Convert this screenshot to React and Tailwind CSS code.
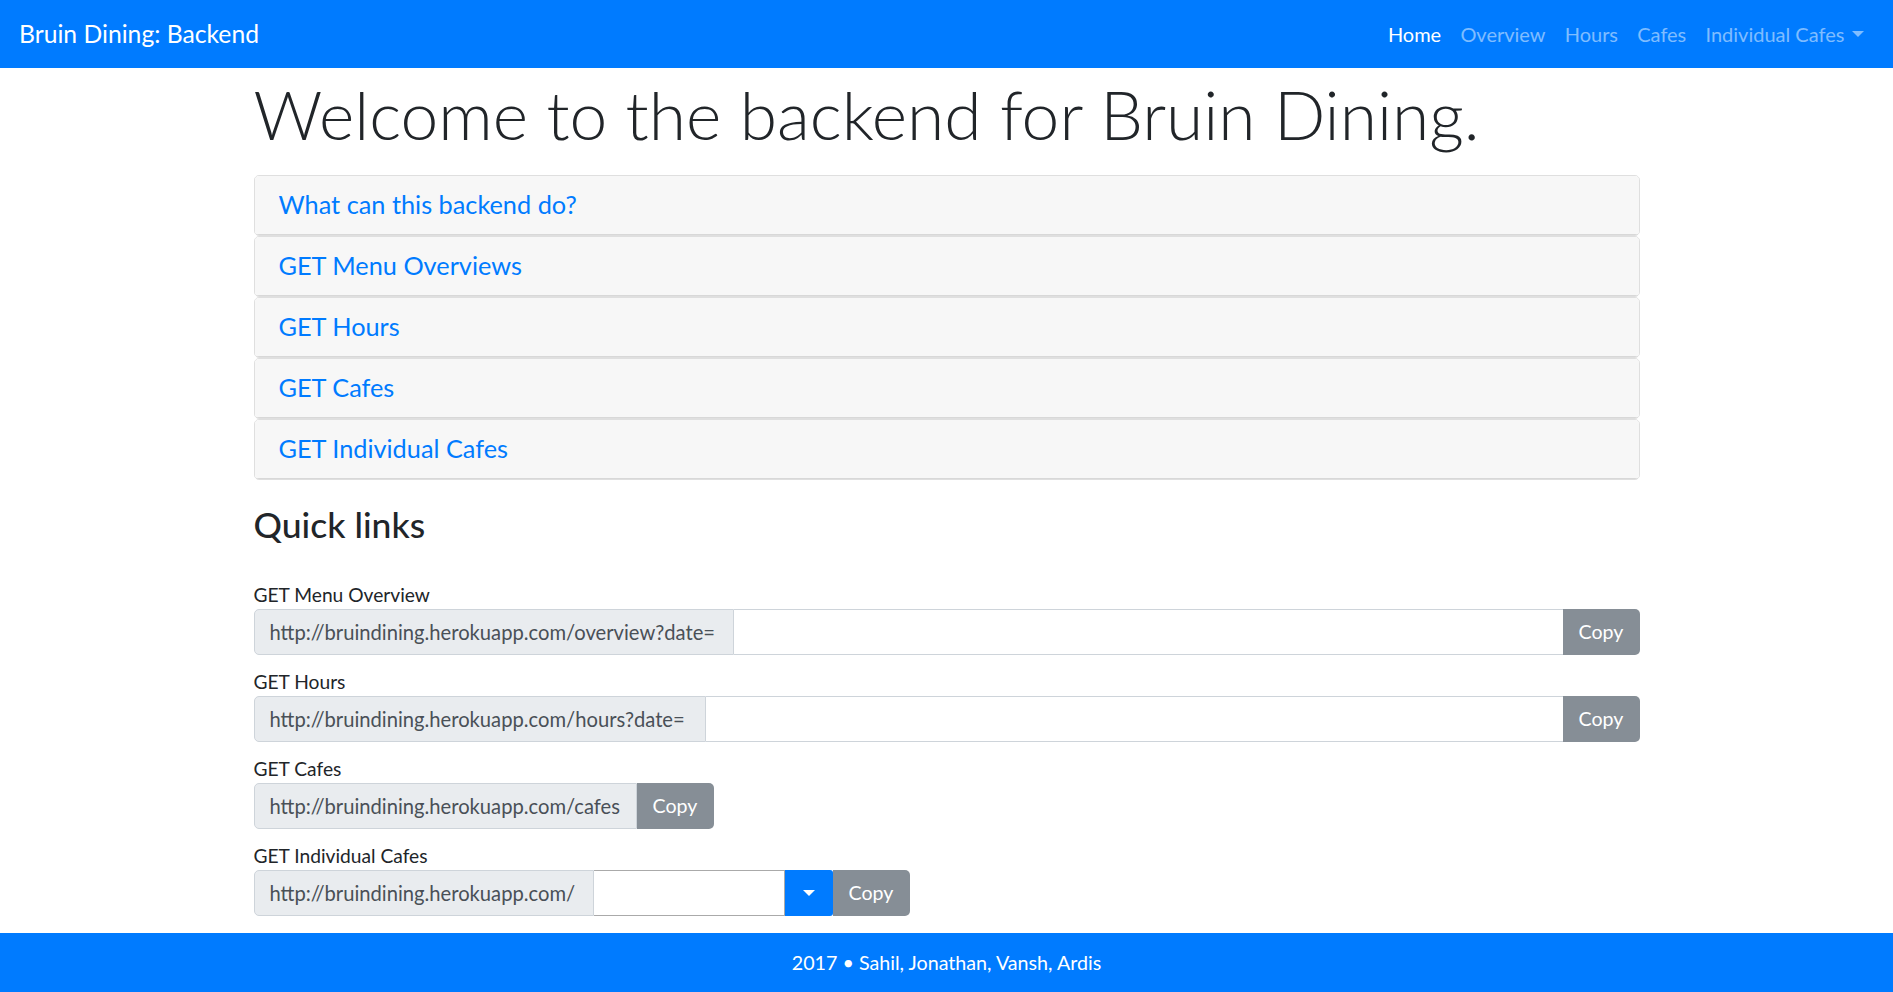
import React from "react";

const sections = [
  "What can this backend do?",
  "GET Menu Overviews",
  "GET Hours",
  "GET Cafes",
  "GET Individual Cafes",
];

const Caret = ({ className }) => (
  <span
    className={`inline-block w-0 h-0 border-t-[6px] border-x-[6px] border-x-transparent ${className}`}
  />
);

const Prepend = ({ width, children }) => (
  <span
    className={`${width} shrink-0 flex items-center px-[15px] bg-[#e9ecef] border border-[#ced4da] rounded-l-[5px] text-[#495057] text-[20.2px] whitespace-nowrap`}
  >
    {children}
  </span>
);

const CopyButton = () => (
  <button className="w-[77px] shrink-0 bg-[#868e96] text-white text-[19.6px] rounded-r-[5px]">Copy</button>
);

const App = () => {
  return (
    <div className="min-h-screen flex flex-col bg-white text-[#212529] text-[19.2px] font-['Lato','Liberation_Sans',sans-serif]">
      <nav className="h-[68px] shrink-0 flex items-center justify-between px-[19px] bg-[#007bff]">
        <span className="text-[24.7px] text-white">Bruin Dining: Backend</span>
        <ul className="flex items-center text-[20px] -mt-[1px]">
          <li className="px-[9.6px] text-white">Home</li>
          <li className="px-[9.6px] text-white/50">Overview</li>
          <li className="px-[9.6px] text-white/50">Hours</li>
          <li className="px-[9.6px] text-white/50">Cafes</li>
          <li className="px-[9.6px] text-white/50 flex items-center gap-[8px]">
            Individual Cafes
            <Caret className="border-t-white/50" />
          </li>
        </ul>
      </nav>

      <main className="w-[1386px] mx-auto flex-1">
        <h1 className="mt-[5px] mb-[21px] text-[67.7px] leading-[1.2] font-light">
          Welcome to the backend for Bruin Dining.
        </h1>

        {/* Accordion */}
        <div>
          {sections.map((title) => (
            <div key={title} className="border border-black/[.125] rounded-[5px] overflow-hidden">
              <div className="h-[59px] flex items-center px-[24px] bg-[#f7f7f7] border-b border-black/[.125]">
                <span className="text-[25.3px] text-[#007bff]">{title}</span>
              </div>
            </div>
          ))}
        </div>

        <h3 className="mt-[24px] mb-[33px] text-[35.5px] leading-[1.2] font-medium">Quick links</h3>

        <label className="block leading-[29px]">GET Menu Overview</label>
        <div className="flex h-[46px] mb-[12px]">
          <Prepend width="w-[480px]">http://bruindining.herokuapp.com/overview?date=</Prepend>
          <input className="flex-1 min-w-0 border-y border-[#ced4da] outline-none" />
          <CopyButton />
        </div>

        <label className="block leading-[29px]">GET Hours</label>
        <div className="flex h-[46px] mb-[12px]">
          <Prepend width="w-[452px]">http://bruindining.herokuapp.com/hours?date=</Prepend>
          <input className="flex-1 min-w-0 border-y border-[#ced4da] outline-none" />
          <CopyButton />
        </div>

        <label className="block leading-[29px]">GET Cafes</label>
        <div className="flex h-[46px] mb-[12px]">
          <Prepend width="w-[383px]">http://bruindining.herokuapp.com/cafes</Prepend>
          <CopyButton />
        </div>

        <label className="block leading-[29px]">GET Individual Cafes</label>
        <div className="flex h-[46px] mb-[16px]">
          <Prepend width="w-[340px]">http://bruindining.herokuapp.com/</Prepend>
          <input className="w-[191px] border border-l-0 border-[#aaaaaa] outline-none" />
          <button className="w-[48px] flex items-center justify-center bg-[#007bff] rounded-r-[3px]">
            <Caret className="border-t-white" />
          </button>
          <CopyButton />
        </div>
      </main>

      <footer className="h-[59px] shrink-0 flex items-center justify-center bg-[#007bff] text-white text-[19.7px]">
        2017 • Sahil, Jonathan, Vansh, Ardis
      </footer>
    </div>
  );
};

export default App;
